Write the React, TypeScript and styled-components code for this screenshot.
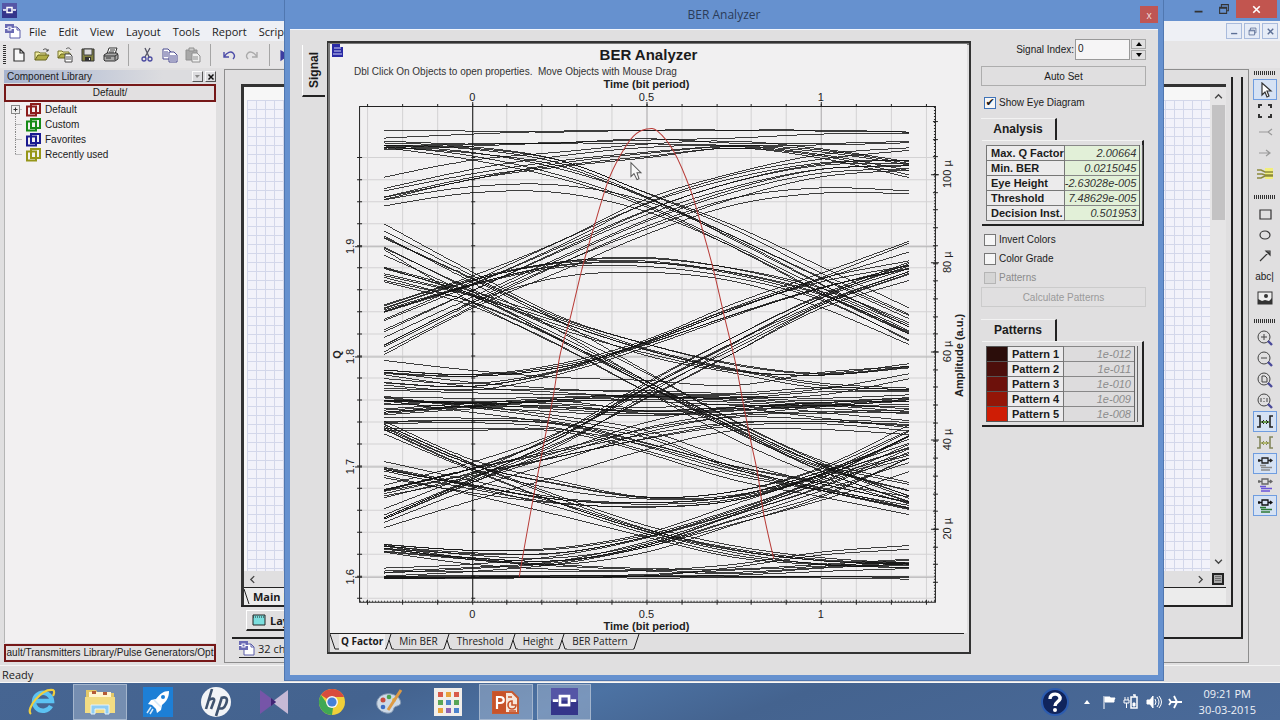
import React from 'react';
import styled, { createGlobalStyle, css } from 'styled-components';

const sans = '"Liberation Sans", Arial, sans-serif';
const ui = '"Open Sans", "Segoe UI", sans-serif';
const blue = '#6691cf';
const face = '#e0dfe0';

const Global = createGlobalStyle`
  * { box-sizing: border-box; }
  body { margin: 0; background: ${face}; font-family: ${sans}; font-size: 10px; color: #1b1b1b; }
  button, input { font: inherit; color: inherit; margin: 0; padding: 0; border: 0; background: none; }
  svg { display: block; flex: none; }
`;

/* ---------- desktop ---------- */
const Desktop = styled.div`
  position: relative;
  display: flex;
  flex-direction: column;
  min-height: 100vh;
  overflow: hidden;
`;
const MainWindow = styled.div`
  flex: 1;
  display: flex;
  flex-direction: column;
  border-bottom: 1px solid #f8f8f8;
`;
const TitleBar = styled.header`
  display: flex;
  justify-content: space-between;
  height: 21px;
  padding-left: 2px;
  background: ${blue};
`;
const WindowButtons = styled.div`
  display: flex;
  padding-right: 3px;
`;
const WindowButton = styled.button<{ $close?: boolean }>`
  display: grid;
  place-items: center;
  width: ${p => (p.$close ? 41 : 25)}px;
  height: 18px;
  background: ${p => (p.$close ? '#c2554f' : 'transparent')};
`;
const MenuBar = styled.nav`
  display: flex;
  align-items: center;
  height: 20px;
  padding-left: 5px;
  background: #eef0f5;
  font-family: ${ui};
  font-size: 11px;
`;
const MenuItems = styled.div`
  flex: 1;
  display: flex;
  gap: 12px;
  padding-left: 8px;
`;
const MdiButtons = styled.div`
  display: flex;
  gap: 2px;
  padding-right: 2px;
`;
const MdiButton = styled.button`
  display: grid;
  place-items: center;
  width: 16px;
  height: 16px;
  border: 1px solid #a9bbdc;
  background: #e6ecf7;
`;
const ToolBar = styled.div`
  display: flex;
  align-items: center;
  height: 27px;
  padding-left: 3px;
  gap: 2px;
  background: #e6e5e6;
`;
const ToolButton = styled.button`
  display: grid;
  place-items: center;
  width: 21px;
  height: 22px;
`;
const Grip = styled.i<{ $across?: boolean }>`
  flex: none;
  ${p => p.$across
    ? css`width: 22px; height: 4px; background: repeating-linear-gradient(90deg, #333 0 1px, transparent 1px 2px);`
    : css`width: 3px; height: 20px; background: repeating-linear-gradient(#333 0 1px, transparent 1px 2px);`}
`;
const Separator = styled.i`
  width: 1px;
  height: 22px;
  margin: 0 5px;
  background: #a5a5a5;
`;
const Body = styled.div`
  flex: 1;
  display: flex;
  background: ${face};
`;
const StatusBar = styled.footer`
  height: 17px;
  padding-left: 2px;
  border-top: 1px solid #f4f4f4;
  font-family: ${ui};
  font-size: 11px;
  line-height: 17px;
`;

/* ---------- component library ---------- */
const Library = styled.aside`
  display: flex;
  flex-direction: column;
  width: 217px;
  padding: 2px 1px 3px 4px;
`;
const LibraryHeader = styled.div`
  display: flex;
  align-items: center;
  gap: 2px;
  height: 13px;
  padding-left: 3px;
  background: linear-gradient(90deg, #a6b4d0, #dcdcdf 75%);
`;
const LibraryTitle = styled.span`flex: 1;`;
const SmallButton = styled.button`
  display: grid;
  place-items: center;
  width: 11px;
  height: 11px;
  border: 1px solid;
  border-color: #fafafa #555 #555 #fafafa;
`;
const PathBox = styled.div`
  display: flex;
  justify-content: center;
  height: 18px;
  margin-top: 1px;
  border: 2px solid #761818;
  background: #e2e0e1;
  line-height: 14px;
  white-space: nowrap;
`;
const Tree = styled.ul`
  flex: 1;
  margin: 0;
  padding: 0 0 0 6px;
  list-style: none;
  border-left: 1px solid #b5b5b5;
  background: #f2f0f1;
`;
const TreeItem = styled.li`
  display: flex;
  align-items: center;
  gap: 4px;
  height: 15px;
`;

/* ---------- workspace ---------- */
const Workspace = styled.main`
  flex: 1;
  display: flex;
  flex-direction: column;
  margin: 1px 0 2px 7px;
  padding: 7px 5px 0 7px;
  border: 1px solid #8d8d8d;
`;
const MdiFrame = styled.div`
  flex: 1;
  display: flex;
  flex-direction: column;
  padding: 0 8px 1px 9px;
  border-right: 2px solid #222;
  border-bottom: 2px solid #222;
`;
const LayoutFrame = styled.div`
  flex: 1;
  display: flex;
  flex-direction: column;
  padding: 7px 0 0 0;
  border-right: 2px solid #222;
`;
const CanvasFrame = styled.div`
  flex: 1;
  display: flex;
  flex-direction: column;
  margin-right: 5px;
  border: solid #333;
  border-width: 3px 0 0 3px;
`;
const CanvasRow = styled.div`
  flex: 1;
  display: flex;
`;
const Canvas = styled.div`
  flex: 1;
  border-top: 13px solid #f7f7f7;
  border-left: 3px solid #f7f7f7;
  background:
    repeating-linear-gradient(90deg, #d3d7ea 0 1px, transparent 1px 9px),
    repeating-linear-gradient(#d3d7ea 0 1px, #f2f2fa 1px 9px);
`;
const VScroll = styled.div`
  display: flex;
  flex-direction: column;
  align-items: center;
  justify-content: space-between;
  width: 16px;
  padding: 5px 0;
  background: #e6e5e6;
`;
const VThumb = styled.div`
  width: 13px;
  height: 115px;
  margin: 4px 0 auto;
  background: #c3c2c3;
`;
const HScroll = styled.div`
  display: flex;
  align-items: center;
  justify-content: space-between;
  height: 17px;
  padding: 0 1px 0 4px;
  border-bottom: 1px solid #222;
`;
const HEnd = styled.div`
  display: flex;
  align-items: center;
  gap: 6px;
`;
const SheetTab = styled.div`
  display: flex;
  align-items: center;
  gap: 3px;
  height: 17px;
  font: bold 11px ${ui};
  background: #ececec;
`;
const LayoutTabs = styled.div`
  display: flex;
  height: 31px;
  padding: 3px 0 5px 5px;
  border-top: 2px solid #222;
`;
const LayoutTab = styled.button`
  display: flex;
  align-items: center;
  gap: 4px;
  width: 80px;
  padding-left: 5px;
  border: 1px solid #fff;
  border-bottom: 2px solid #222;
  font: bold 11px ${ui};
`;
const DocTab = styled.button`
  display: flex;
  align-items: center;
  gap: 3px;
  width: 80px;
  height: 19px;
  margin: 0 0 4px 7px;
  border-bottom: 1px solid #222;
  font-family: ${ui};
  font-size: 11px;
`;
const SideBar = styled.div`
  display: flex;
  flex-direction: column;
  align-items: center;
  width: 31px;
  padding-top: 3px;
`;
const SideGroup = styled.div`
  display: flex;
  flex-direction: column;
  align-items: center;
  padding: 4px 0 11px;
`;
const SideButton = styled.button<{ $on?: boolean }>`
  display: grid;
  place-items: center;
  width: 24px;
  height: 21px;
  border: 1px solid ${p => (p.$on ? '#6f9de0' : 'transparent')};
  background: ${p => (p.$on ? '#d6e2f4' : 'transparent')};
`;

/* ---------- dialog ---------- */
const Dialog = styled.section`
  position: absolute;
  top: 0;
  right: 116px;
  bottom: 39px;
  left: 284px;
  display: flex;
  flex-direction: column;
  padding: 0 5px 6px;
  border: 1px solid #5077b0;
  border-top: 0;
  background: ${blue};
`;
const DialogTitle = styled.header`
  flex: none;
  display: grid;
  grid-template-columns: 18px 1fr 18px;
  align-items: center;
  height: 29px;
  color: #2a3c59;
  font-family: ${ui};
  font-size: 12px;
  text-align: center;
`;
const DialogClose = styled.button`
  align-self: start;
  height: 17px;
  margin-top: 6px;
  background: #bf5654;
  color: #f1dcdc;
  font-size: 10px;
  line-height: 16px;
`;
const DialogBody = styled.div`
  flex: 1;
  display: flex;
  border-top: 1px solid #f3f6fc;
  background: ${face};
`;
const SignalTab = styled.button`
  align-self: flex-start;
  width: 23px;
  height: 52px;
  margin: 15px 0 0 12px;
  border-right: 1px solid #fff;
  border-top: 2px solid #222;
  writing-mode: vertical-rl;
  transform: rotate(180deg);
  font: bold 12px ${sans};
`;
const ChartPanel = styled.div`
  flex: 1;
  display: flex;
  flex-direction: column;
  margin: 11px 0 21px 2px;
  border: 1px solid #333;
  border-width: 2px 2px 2px 1px;
  box-shadow: inset 1px 1px 0 1px #777;
`;
const ChartSheet = styled.div`
  flex: 1;
  margin: 1px 2px 0 2px;
  background: #f1f0f1;
`;
const ChartHeader = styled.div`
  display: grid;
  grid-template-columns: 14px 1fr 16px;
  padding-left: 2px;
`;
const ChartTitle = styled.h1`
  margin: 1px 0 0;
  font-size: 15px;
  line-height: 20px;
  text-align: center;
`;
const ChartHint = styled.p`
  margin: 0 0 0 24px;
  line-height: 14px;
  color: #333;
  white-space: pre;
`;
const Plot = styled.svg`
  width: 100%;
  height: auto;
`;
const TabStrip = styled.div`
  display: flex;
  height: 19px;
  border-top: 1px solid #222;
  margin: 0 5px 0 2px;
`;
const ChartTab = styled.button<{ $active?: boolean }>`
  height: 16px;
  padding: 0 ${p => (p.$active ? 2 : 5)}px;
  border-bottom: 1px solid ${p => (p.$active ? '#f1f0f1' : '#777')};
  background: ${p => (p.$active ? '#f1f0f1' : 'transparent')};
  font-family: ${ui};
  font-size: 10px;
  font-weight: ${p => (p.$active ? 700 : 400)};
`;
const Controls = styled.form`
  display: flex;
  flex-direction: column;
  width: 187px;
  padding: 9px 12px 0 10px;
`;
const IndexRow = styled.label`
  display: flex;
  align-items: center;
  justify-content: flex-end;
  gap: 1px;
  height: 21px;
`;
const IndexInput = styled.input`
  width: 55px;
  height: 21px;
  padding: 0 2px 3px;
  border: 1px solid #999;
  background: #f6f5f6;
`;
const Spinner = styled.span`
  display: flex;
  flex-direction: column;
  gap: 1px;
  width: 15px;
`;
const SpinButton = styled.button`
  display: grid;
  place-items: center;
  height: 10px;
  border: 1px solid #a8a8a8;
`;
const PushButton = styled.button`
  height: 20px;
  border: 1px solid #adadad;
  &:disabled { color: #9a9a9a; border-color: #cbcbcb; }
`;
const AutoButton = styled(PushButton)`margin: 6px 0 7px;`;
const Check = styled.label<{ $off?: boolean }>`
  display: flex;
  align-items: center;
  gap: 3px;
  height: 19px;
  padding-left: 3px;
  color: ${p => (p.$off ? '#8b8b8b' : 'inherit')};
`;
const CheckBox = styled.input`
  appearance: none;
  display: grid;
  place-items: center;
  width: 12px;
  height: 12px;
  border: 1px solid #777;
  background: #f6f6f6;
  &:checked { border-color: #3f73b8; }
  &:checked::after { content: '✔'; font: 11px/10px "DejaVu Sans", sans-serif; }
  &:disabled { background: #d5d5d5; border-color: #b5b5b5; }
`;
const GroupTab = styled.h2`
  align-self: flex-start;
  width: 76px;
  height: 22px;
  margin: 0;
  border-right: 2px solid #222;
  border-top: 1px solid #f2f2f2;
  font-size: 12px;
  line-height: 20px;
  text-align: center;
`;
const AnalysisTab = styled(GroupTab)`margin-top: 6px;`;
const PatternTab = styled(GroupTab)`margin-top: 12px;`;
const GroupBox = styled.div`
  margin: 0 2px 4px 1px;
  padding: 4px 4px 3px;
  border-right: 2px solid #222;
  border-bottom: 2px solid #222;
  border-top: 1px solid #f3f3f3;
`;
const Table = styled.table`
  width: 100%;
  border-collapse: collapse;
  border: 1px solid #666;
  border-right: 4px double #666;
  font-size: 11px;
  line-height: 14px;
`;
const Name = styled.th`
  width: 75px;
  height: 15px;
  padding: 0 0 0 4px;
  border: 1px solid #777;
  background: #ecebec;
  text-align: left;
  white-space: nowrap;
`;
const PatternName = styled(Name)`width: 56px;`;
const Value = styled.td<{ $green?: boolean }>`
  padding: 0 3px 0 0;
  border: 1px solid #888;
  background: ${p => (p.$green ? '#e2f0d8' : '#dddcdd')};
  color: ${p => (p.$green ? '#333' : '#8c8c8c')};
  font-style: italic;
  text-align: right;
  white-space: nowrap;
`;
const Swatch = styled.td<{ $color: string }>`
  width: 21px;
  padding: 0;
  border: 1px solid #555;
  background: ${p => p.$color};
`;

/* ---------- taskbar ---------- */
const TaskBar = styled.footer`
  display: flex;
  align-items: center;
  height: 37px;
  padding: 0 24px 0 15px;
  gap: 4px;
  background: linear-gradient(160deg, #466592, #44638f 30%, #4c72a3 45%, #44638f 60%, #4a6a99);
  color: #eef2f8;
  font-family: ${ui};
  font-size: 11px;
`;
const TaskButton = styled.button<{ $open?: boolean }>`
  display: grid;
  place-items: center;
  width: 54px;
  height: 36px;
  border: 1px solid ${p => (p.$open ? '#a3b5cd' : 'transparent')};
  background: ${p => (p.$open ? 'rgba(190, 205, 225, .4)' : 'transparent')};
`;
const Tray = styled.div`
  display: flex;
  align-items: center;
  gap: 6px;
  margin-left: auto;
`;
const Clock = styled.time`
  margin-left: 9px;
  line-height: 16px;
  text-align: center;
`;

/* ---------- icons ---------- */
const AppIcon = ({ size = 15 }: { size?: number }) => (
  <svg width={size} height={size} viewBox="0 0 15 15">
    <rect width="15" height="15" fill="#34358a" />
    <path d="M0 0h15v7H0z" fill="#5556a6" />
    <rect x="5" y="4.500" width="5" height="5" fill="none" stroke="#fff" strokeWidth="1.500" />
    <path d="M1 7h3M11 7h3" stroke="#fff" strokeWidth="1.500" />
  </svg>
);
const DocIcon = () => (
  <svg width="16" height="15" viewBox="0 0 16 15">
    <path d="M5 3h7l3 3v8H5z" fill="#fff" stroke="#5a5da8" />
    <path d="M12 3v3h3" fill="none" stroke="#5a5da8" />
    <rect width="9" height="9" fill="#6a6bb4" />
    <rect x="3" y="3" width="3" height="3" fill="none" stroke="#fff" />
    <path d="M0 4.500h3M6 4.500h3" stroke="#fff" />
  </svg>
);
const Stroke = ({ d, color = '#333', w = 1.2, size = 16, fill = 'none' }: { d: string; color?: string; w?: number; size?: number; fill?: string }) => (
  <svg width={size} height={size} viewBox="0 0 16 16"><path d={d} fill={fill} stroke={color} strokeWidth={w} /></svg>
);
const minimise = 'M3 11h9';
const restore = 'M3 6h8v7H3zM5 6V3h8v7h-2M3 7h8';
const cross = 'M4 4l8 8M12 4l-8 8';

const toolIcons: [string, React.ReactNode][] = [
  ['New', <Stroke d="M3 2h6l4 4v8H3zM9 2v4h4" fill="#f7f7f7" />],
  ['Open', <svg width="16" height="16" viewBox="0 0 16 16"><path d="M1 13V5h4l1 1h6v2" fill="#f0eda0" stroke="#77752c" /><path d="M1 13l3-5h11l-3 5z" fill="#b0ad45" stroke="#66641f" /><path d="M9 3c2-2 4-1 5 1m0-2v2h-2" fill="none" stroke="#444" /></svg>],
  ['Open sample', <svg width="16" height="16" viewBox="0 0 16 16"><path d="M1 11V4h4l1 1h6v2" fill="#f0eda0" stroke="#77752c" /><path d="M1 11l3-4h10l-2 4z" fill="#b0ad45" stroke="#66641f" /><path d="M8 7h5l2 2v6H8z" fill="#fff" stroke="#444" /><path d="M9 10h5M9 12h5M9 2c2-2 4-1 5 1" fill="none" stroke="#555" /></svg>],
  ['Save', <svg width="16" height="16" viewBox="0 0 16 16"><path d="M2 2h12v12H2z" fill="#808040" stroke="#333" /><path d="M4 2h8v6H4z" fill="#ddd" stroke="#444" /><path d="M5 10h6v4H5z" fill="#333" /><path d="M9 11h1v2H9z" fill="#fff" /></svg>],
  ['Print', <svg width="16" height="16" viewBox="0 0 16 16"><path d="M4 7l2-6h8l-2 6z" fill="#fff" stroke="#333" /><path d="M1 8l3-2h10l1 2v4l-3 2H2l-1-1z" fill="#aaa" stroke="#333" /><path d="M1 9h11v4M12 9l3-2M7 3h5M6 5h5M3 11h5" fill="none" stroke="#333" /></svg>],
];
const editIcons: [string, React.ReactNode][] = [
  ['Cut', <svg width="16" height="16" viewBox="0 0 16 16" fill="none" stroke="#4a4aa0" strokeWidth="1.300"><path d="M6 1l4 9M11 1L6 10" stroke="#556" /><circle cx="5" cy="12" r="2" /><circle cx="11" cy="12" r="2" /></svg>],
  ['Copy', <svg width="16" height="16" viewBox="0 0 16 16" stroke="#4a4a90"><path d="M1 2h5l3 3v7H1z" fill="#fff" /><path d="M7 5h5l3 3v7H7z" fill="#fff" /><path d="M2 5h4M2 7h4M2 9h4M8 9h6M8 11h6M8 13h6" /></svg>],
  ['Paste', <svg width="16" height="16" viewBox="0 0 16 16" stroke="#909090"><path d="M1 3h11v10H1z" fill="#a8a8a8" /><path d="M4 1h5v3H4z" fill="#ccc" /><path d="M7 6h5l3 3v6H7z" fill="#eee" /><path d="M8 10h5M8 12h5" /></svg>],
];
const undoIcons: [string, React.ReactNode][] = [
  ['Undo', <Stroke d="M3 5v5h5M3 10c3-5 7-6 9-4s2 4 0 6" color="#4c4ca8" w={1.4} />],
  ['Redo', <Stroke d="M13 5v5H8M13 10c-3-5-7-6-9-4s-2 4 0 6" color="#aaaaaa" w={1.4} />],
];
const Lens = ({ children }: { children: React.ReactNode }) => (
  <svg width="18" height="18" viewBox="0 0 18 18" fill="none" stroke="#444"><circle cx="8" cy="8" r="6" /><path d="M12 12l4 4" stroke="#4a4a9a" strokeWidth="2.400" />{children}</svg>
);
const Comp = ({ a, b }: { a: string; b: string }) => (
  <svg width="16" height="16" viewBox="0 0 16 16" fill="none"><path d="M5 2h6v5H5zM1 4.500h4M11 4.500h4M2 3v3M13 3l2 1.500-2 1.500" stroke={a} strokeWidth="1.300" /><path d="M3 9.500h6M4 11.500h11M4 14h9" stroke={b} strokeWidth="1.300" /></svg>
);
const Link = ({ c, g }: { c: string; g: string }) => (
  <svg width="18" height="14" viewBox="0 0 18 14" fill="none" stroke={c} strokeWidth="1.600"><path d="M1 1h3v11H1M17 1h-3v11h3" /><path d="M5 7h8" stroke={g} /><path d="M8 5L6 7l2 2M10 5l2 2-2 2" strokeWidth="1" /></svg>
);
type SideItem = [string, React.ReactNode, boolean?];
const sideGroups: SideItem[][] = [
  [
    ['Select', <Stroke d="M5 1v12l3-3 2 5 2-1-2-5h4z" fill="#fff" />, true],
    ['Fit', <Stroke d="M2 5V2h3M11 2h3v3M14 11v3h-3M5 14H2v-3" w={2} />],
    ['Input port', <Stroke d="M2 8h10M15 5l-4 3 4 3" color="#999" />],
    ['Output port', <Stroke d="M2 8h10M9 5l4 3-4 3" color="#999" />],
    ['Path', <svg width="18" height="14" viewBox="0 0 18 14" fill="none"><path d="M9 1h8v11H9z" fill="#f2ef7c" /><path d="M1 3h4l4 2h8M1 7h5l3 1h8M1 11h4l4-2h8" stroke="#8c8a3c" strokeWidth="1.500" /></svg>],
  ],
  [
    ['Rectangle', <Stroke d="M3 4h11v9H3z" />],
    ['Ellipse', <Stroke d="M3 8a5 4 0 1 0 10 0a5 4 0 1 0-10 0" />],
    ['Arrow', <Stroke d="M3 13L12 4M9 3h4v4z" />],
    ['Text', 'abc|'],
    ['Image', <svg width="16" height="14" viewBox="0 0 16 14"><rect x="1" y="1" width="14" height="12" fill="#eee" stroke="#333" /><circle cx="9" cy="5" r="2" fill="#333" /><path d="M1 13V8l4 2 3-1 4 1 3-3v6z" fill="#333" /></svg>],
  ],
  [
    ['Zoom in', <Lens><path d="M8 5v6M5 8h6" /></Lens>],
    ['Zoom out', <Lens><path d="M5 8h6" /></Lens>],
    ['Zoom page', <Lens><path d="M6 5h3l2 2v4H6z" /></Lens>],
    ['Zoom 1:1', <Lens><path d="M5 6v4M11 6v4M8 6v1M8 9v1" /></Lens>],
    ['Connect', <Link c="#222" g="#4d8d22" />, true],
    ['Disconnect', <Link c="#83865c" g="#a7b050" />],
    ['Names', <Comp a="#222" b="#8a8a8a" />, true],
    ['Results', <Comp a="#666" b="#6a55d8" />],
    ['Notes', <Comp a="#111" b="#2c7a35" />, true],
  ],
];
const Box = ({ c }: { c: string }) => (
  <svg width="15" height="14" viewBox="0 0 15 14" fill="none" stroke={c} strokeWidth="2"><path d="M5 1h9v9H5z" /><path d="M1 3.500h9v9H1z" /></svg>
);
const Branch = ({ plus, last }: { plus?: boolean; last?: boolean }) => (
  <svg width="11" height="15" viewBox="0 0 11 15" fill="none" stroke="#888">
    <path d={`M4.500 ${plus ? 8 : 0}V${last ? 7 : 15}M4.500 7.500H11`} strokeDasharray="1 1" />
    {plus && <><rect x=".5" y="3.500" width="8" height="8" fill="#eee" /><path d="M2.500 7.500h4M4.500 5.500v4" stroke="#333" /></>}
  </svg>
);

const taskIcons: [string, React.ReactNode, boolean?][] = [
  ['Internet Explorer', <svg width="30" height="30" viewBox="0 0 30 30" fill="none"><path d="M24 19a9 9 0 1 1 1-5H9" stroke="#5cc3f3" strokeWidth="4.500" /><path d="M4 27C-2 22 15 1 26 3c2 1 1 4 0 6" stroke="#f0cf3e" strokeWidth="2.200" /></svg>],
  ['File Explorer', <svg width="32" height="30" viewBox="0 0 32 30"><path d="M2 3h10l2 3h16v19H2z" fill="#e3c868" /><path d="M5 5h22v5H5z" fill="#fff5d0" /><path d="M8 4h4v3H8zM19 5h4v3h-4z" fill="#b55b36" /><path d="M1 10h30v16H1z" fill="#f2dc83" /><path d="M7 27v-9h18v9h-4v-5H11v5z" fill="#8fcdf3" stroke="#e4f3fd" /></svg>, true],
  ['Rocket', <svg width="30" height="30" viewBox="0 0 30 30"><rect width="30" height="30" fill="#1d7fd6" /><path d="M26 4c-6 0-9 3-13 8l-5 1-3 4 4 1 4 4 1 4 4-3 1-5c5-4 7-8 7-14z" fill="#fff" /><circle cx="20" cy="10" r="2" fill="#1d7fd6" /><path d="M8 20l-4 6M10 22l-3 5M11 13l7 7" stroke="#d6e9f9" strokeWidth="1.500" /></svg>],
  ['HP', <svg width="30" height="30" viewBox="0 0 30 30"><circle cx="15" cy="15" r="15" fill="#f2f4f7" /><path d="M11 2L5 22M8 13c3-2 6-2 5 1l-3 8M21 10l-6 19M20 11c6-2 7 1 5 6s-4 5-8 4" fill="none" stroke="#3f536f" strokeWidth="2.600" /></svg>],
  ['Media player', <svg width="30" height="26" viewBox="0 0 30 26"><path d="M29 1L13 13l16 12z" fill="#c6b9d6" /><path d="M1 1l16 12L1 25z" fill="#7655a8" /><path d="M17 13l-5-4v8z" fill="#402575" /></svg>],
  ['Chrome', <svg width="28" height="28" viewBox="0 0 28 28"><circle cx="14" cy="14" r="13" fill="#f0cf3a" /><path d="M14 14L3 7a13 13 0 0 1 23 2H14z" fill="#d84c3d" /><path d="M14 27A13 13 0 0 1 3 7l7 10 5 3z" fill="#40a854" /><circle cx="14" cy="14" r="6" fill="#f5f5f5" /><circle cx="14" cy="14" r="4.600" fill="#4480d8" /></svg>],
  ['Paint', <svg width="30" height="30" viewBox="0 0 30 30"><path d="M3 12C8 4 22 6 25 13s-5 5-6 8-2 6-8 5S-1 19 3 12z" fill="#cdd9e6" stroke="#8296b0" /><circle cx="8" cy="13" r="2.500" fill="#c84c3e" /><circle cx="14" cy="10" r="2.300" fill="#4aa24f" /><circle cx="8" cy="20" r="2.300" fill="#3d6cc4" /><circle cx="19" cy="13" r="2" fill="#e8c537" /><path d="M13 23L26 3" stroke="#dd9a44" strokeWidth="3" /></svg>],
  ['Apps', <svg width="28" height="28" viewBox="0 0 28 28"><rect width="28" height="28" fill="#f1eeea" />{['#d95a4b', '#e8a33c', '#d95a4b', '#5aa556', '#4c83cc', '#5aa556', '#e8a33c', '#8f63b0', '#4c83cc'].map((c, i) => <rect key={i} x={4 + (i % 3) * 8} y={4 + Math.floor(i / 3) * 8} width="5" height="5" fill={c} />)}</svg>],
  ['PowerPoint', <svg width="28" height="28" viewBox="0 0 28 28"><path d="M1 4h19l6 6v15H1z" fill="#f7e6da" stroke="#c75b32" strokeWidth="2" /><path d="M1 4h13v21H1z" fill="#c8532a" /><path d="M20 13a4 4 0 1 0 4 4h-4z" fill="none" stroke="#c8532a" strokeWidth="1.600" /><path d="M16 9h4M17 23h7" stroke="#c8532a" strokeWidth="1.500" /><path d="M5 21V9h3c5 0 5 6 0 6H5" fill="none" stroke="#fff" strokeWidth="2.200" /></svg>, true],
  ['OptiSystem', <AppIcon size={27} />, true],
];

/* ---------- eye diagram ---------- */
// Every bundle: centre line at t = -0.25 … 1.25 in quarter-bit steps, half-spread at the same times, trace count.
type Bundle = { mid: number[]; spread: number[]; n: number };
const xs = [384, 472, 559, 646, 733, 820, 908];
const bundles: Bundle[] = [
  { mid: [130, 131, 132, 130, 130, 131, 132], spread: [0, 0, 0, 0, 0, 0, 0], n: 1 },
  { mid: [138, 134, 131, 130, 130, 130, 132], spread: [0, 0, 0, 0, 0, 0, 0], n: 1 },
  { mid: [141, 144, 142, 140, 138, 134, 133], spread: [0, 0, 1, 0, 0, 0, 0], n: 1 },
  { mid: [149, 145, 143, 141, 144, 144, 142], spread: [1, 1, 0, 2, 1, 1, 1], n: 2 },
  { mid: [145, 149, 162, 195, 232, 274, 314], spread: [2, 3, 3, 3, 6, 6, 5], n: 4 },
  { mid: [146, 156, 174, 203, 244, 288, 328], spread: [1, 3, 4, 5, 5, 6, 5], n: 3 },
  { mid: [177, 160, 152, 144, 141, 149, 162], spread: [0, 0, 0, 0, 0, 1, 1], n: 1 },
  { mid: [192, 174, 160, 151, 146, 152, 166], spread: [4, 4, 3, 3, 1, 3, 4], n: 3 },
  { mid: [198, 178, 166, 157, 148, 157, 176], spread: [1, 1, 1, 1, 0, 1, 1], n: 2 },
  { mid: [203, 190, 189, 206, 242, 287, 330], spread: [4, 3, 3, 4, 4, 5, 5], n: 2 },
  { mid: [308, 279, 243, 201, 174, 157, 149], spread: [3, 4, 3, 3, 1, 2, 1], n: 2 },
  { mid: [325, 287, 248, 210, 182, 165, 162], spread: [7, 5, 5, 5, 4, 3, 3], n: 4 },
  { mid: [343, 300, 260, 223, 193, 173, 168], spread: [5, 4, 4, 5, 4, 3, 2], n: 3 },
  { mid: [353, 307, 268, 230, 201, 190, 192], spread: [2, 1, 3, 3, 3, 3, 2], n: 2 },
  { mid: [309, 282, 264, 261, 272, 294, 333], spread: [3, 4, 3, 4, 4, 5, 8], n: 6 },
  { mid: [345, 302, 277, 272, 281, 307, 344], spread: [0, 0, 0, 0, 0, 0, 0], n: 1 },
  { mid: [237, 279, 320, 347, 367, 374, 366], spread: [11, 8, 6, 5, 4, 1, 2], n: 4 },
  { mid: [240, 284, 330, 379, 425, 463, 485], spread: [12, 8, 7, 6, 5, 4, 5], n: 3 },
  { mid: [248, 296, 342, 388, 435, 472, 497], spread: [1, 5, 3, 5, 5, 4, 5], n: 2 },
  { mid: [275, 300, 338, 382, 425, 466, 498], spread: [9, 6, 6, 7, 4, 5, 4], n: 5 },
  { mid: [272, 294, 322, 351, 370, 385, 389], spread: [4, 3, 4, 4, 2, 2, 1], n: 3 },
  { mid: [371, 375, 366, 342, 309, 279, 249], spread: [2, 1, 2, 2, 5, 7, 12], n: 4 },
  { mid: [382, 386, 371, 343, 311, 284, 266], spread: [3, 3, 2, 3, 5, 5, 4], n: 4 },
  { mid: [360, 370, 377, 380, 385, 372, 366], spread: [0, 0, 0, 0, 0, 0, 0], n: 1 },
  { mid: [373, 384, 390, 394, 396, 392, 376], spread: [1, 2, 2, 3, 2, 3, 2], n: 2 },
  { mid: [389, 391, 392, 393, 395, 389, 390], spread: [1, 2, 2, 2, 2, 2, 1], n: 2 },
  { mid: [399, 401, 399, 396, 398, 401, 397], spread: [2, 3, 3, 3, 3, 3, 2], n: 3 },
  { mid: [401, 404, 409, 413, 409, 404, 399], spread: [2, 2, 2, 2, 2, 2, 2], n: 3 },
  { mid: [411, 405, 399, 398, 401, 405, 411], spread: [2, 2, 2, 3, 3, 2, 2], n: 3 },
  { mid: [413, 407, 403, 412, 411, 404, 402], spread: [2, 2, 2, 1, 2, 2, 2], n: 2 },
  { mid: [407, 403, 405, 409, 406, 415, 424], spread: [2, 2, 2, 3, 3, 3, 3], n: 2 },
  { mid: [398, 408, 419, 434, 465, 487, 505], spread: [2, 3, 3, 3, 4, 4, 5], n: 3 },
  { mid: [421, 420, 424, 445, 469, 486, 504], spread: [3, 2, 3, 4, 5, 5, 6], n: 4 },
  { mid: [429, 429, 430, 449, 474, 491, 510], spread: [2, 1, 1, 3, 4, 4, 4], n: 2 },
  { mid: [426, 464, 484, 497, 493, 471, 432], spread: [4, 4, 4, 1, 3, 4, 6], n: 4 },
  { mid: [427, 466, 500, 529, 549, 560, 564], spread: [5, 4, 4, 3, 3, 3, 2], n: 4 },
  { mid: [469, 486, 500, 504, 498, 474, 446], spread: [6, 5, 3, 3, 3, 3, 6], n: 5 },
  { mid: [470, 488, 508, 533, 553, 562, 565], spread: [5, 5, 5, 3, 4, 3, 3], n: 3 },
  { mid: [490, 469, 437, 392, 348, 303, 272], spread: [4, 6, 6, 7, 7, 6, 7], n: 5 },
  { mid: [492, 471, 453, 435, 422, 421, 425], spread: [4, 4, 4, 5, 4, 2, 4], n: 4 },
  { mid: [515, 478, 438, 386, 340, 299, 268], spread: [5, 4, 6, 6, 5, 5, 5], n: 4 },
  { mid: [519, 483, 455, 427, 412, 410, 409], spread: [3, 4, 4, 4, 4, 4, 4], n: 3 },
  { mid: [527, 500, 475, 449, 430, 429, 434], spread: [0, 0, 0, 0, 0, 0, 0], n: 1 },
  { mid: [545, 551, 550, 535, 509, 478, 436], spread: [2, 2, 3, 2, 4, 4, 6], n: 4 },
  { mid: [549, 557, 560, 546, 518, 491, 454], spread: [3, 2, 3, 4, 5, 6, 5], n: 4 },
  { mid: [548, 560, 566, 569, 571, 566, 561], spread: [4, 3, 2, 1, 2, 2, 3], n: 3 },
  { mid: [570, 566, 559, 541, 515, 484, 458], spread: [2, 2, 4, 5, 4, 5, 3], n: 3 },
  { mid: [575, 570, 563, 547, 524, 500, 471], spread: [1, 2, 2, 3, 2, 1, 1], n: 1 },
  { mid: [574, 573, 573, 572, 565, 553, 547], spread: [2, 2, 2, 3, 2, 2, 2], n: 2 },
  { mid: [577, 577, 576, 575, 572, 568, 563], spread: [1, 1, 1, 1, 2, 2, 4], n: 2 },
  { mid: [577, 576, 576, 576, 576, 576, 577], spread: [1, 1, 1, 2, 1, 1, 1], n: 3 },
];

const smooth = (pts: number[][]) => pts.slice(1).reduce((d, p, i) => {
  const a = pts[Math.max(0, i - 1)], b = pts[i], c = pts[Math.min(pts.length - 1, i + 2)];
  return `${d}C${b[0] + (p[0] - a[0]) / 6} ${b[1] + (p[1] - a[1]) / 6} ${p[0] - (c[0] - b[0]) / 6} ${p[1] - (c[1] - b[1]) / 6} ${p[0]} ${p[1]}`;
}, `M${pts[0][0]} ${pts[0][1]}`);

const traces = bundles.flatMap((b, bi) => Array.from({ length: b.n }, (_, i) => {
  const t = b.n === 1 ? 0 : (2 * i) / (b.n - 1) - 1;
  return smooth(xs.map((x, k) => {
    const wobble = Math.sin(bi * 3.1 + i * 2.3 + k * 0.9) * 0.35;
    return [x, b.mid[k] + b.spread[k] * (t + wobble)];
  }));
})).join('');

const qCurve = smooth([[519, 576], [522, 558], [533, 497], [546, 430], [553, 395], [560, 353], [570, 317], [582, 267], [594, 225], [608, 180], [620, 155], [633, 136], [646, 129], [657, 131], [673, 151], [690, 190], [702, 230], [713, 270], [723, 313], [735, 363], [742, 400], [750, 440], [757, 473], [763, 513], [773, 558]]);

const range = (from: number, to: number, step: number) => {
  const out: number[] = [];
  for (let v = from; v <= to; v += step) out.push(Math.round(v) + 0.5);
  return out;
};
const gridX = range(367, 934, 34.85);
const gridY = range(113, 600, 22);

const EyePlot = () => (
  <Plot viewBox="330 79 636 553" role="img" aria-label="Eye diagram with Q factor" fontFamily={sans} fontSize="11" fill="#222">
    <g stroke="#d3d2d3">
      {gridX.map(x => <path key={x} d={`M${x} 107V600`} />)}
      {gridY.slice(2).map(y => <path key={y} d={`M360 ${y}H934`} />)}
    </g>
    <path d="M646.500 107V600M820.500 107V600M360 246.500H934M360 356.500H934M360 466.500H934M360 576.500H934" stroke="#b4b3b4" />
    <path d="M472.500 107V600" stroke="#111" />
    <g stroke="#222">
      <path d="M359.500 601V106.500H934.500V601M359 601.500H935" fill="none" />
      <path d="M360 600.500H934" strokeDasharray="1 2" />
      <path d="M933.500 107V600" strokeDasharray="1 2" />
      {gridX.map(x => <path key={x} d={`M${x} 104v2M${x} 599v5`} />)}
      {gridY.slice(2).map(y => <path key={y} d={`M357 ${y}h5M471 ${y}h4`} />)}
      <path d="M355 246.500h7M355 356.500h7M355 466.500h7M355 576.500h7M472.500 102v4M646.500 102v4M820.500 102v4" />
      {range(121, 598, 17.7).map(y => <path key={y} d={`M932 ${y}h5`} />)}
      <path d="M930 174.500h8M930 262.500h8M930 351.500h8M930 439.500h8M930 528.500h8" />
    </g>
    <path d={traces} fill="none" stroke="#111" strokeWidth=".8" shapeRendering="crispEdges" />
    <path d={qCurve} fill="none" stroke="#b83a36" />
    <path d="M630.500 162.500v14l3-3 3 6 2-1-2-6h4z" fill="#f7f7f7" stroke="#555" />
    <g textAnchor="middle">
      <g fontWeight="bold">
        <text x="646" y="88">Time (bit period)</text>
        <text x="646" y="629">Time (bit period)</text>
        <text transform="translate(341 354) rotate(-90)">Q</text>
        <text transform="translate(962 355) rotate(-90)">Amplitude (a.u.)</text>
      </g>
      {[101, 617].map(y => [[472, '0'], [646, '0.5'], [820, '1']].map(([x, s]) => <text key={`${x}-${y}`} x={x} y={y}>{s}</text>))}
      {[[246, '1.9'], [356, '1.8'], [466, '1.7'], [576, '1.6']].map(([y, s]) => <text key={s} transform={`translate(354 ${y}) rotate(-90)`}>{s}</text>)}
      {[[174, '100 µ'], [262, '80 µ'], [351, '60 µ'], [439, '40 µ'], [528, '20 µ']].map(([y, s]) => <text key={s} transform={`translate(950 ${y}) rotate(-90)`}>{s}</text>)}
    </g>
  </Plot>
);

const Slant = ({ kind }: { kind: 'first' | 'mid' | 'last' }) => (
  <svg width="9" height="16" viewBox="0 0 9 16" fill="none" stroke="#222">
    {kind === 'first' && <path d="M0 0l5 15h4" />}
    {kind === 'mid' && <path d="M0 15h1L6 0M4 6l3 9h2" />}
    {kind === 'last' && <path d="M0 15h1L6 0" />}
  </svg>
);

const analysis = [['Max. Q Factor', '2.00664'], ['Min. BER', '0.0215045'], ['Eye Height', '-2.63028e-005'], ['Threshold', '7.48629e-005'], ['Decision Inst.', '0.501953']];
const patterns = [['Pattern 1', '1e-012', '#2b0d0a'], ['Pattern 2', '1e-011', '#4c0f0b'], ['Pattern 3', '1e-010', '#6d110b'], ['Pattern 4', '1e-009', '#931607'], ['Pattern 5', '1e-008', '#cf1d05']];
const tabs = ['Q Factor', 'Min BER', 'Threshold', 'Height', 'BER Pattern'];

const Tools = ({ items }: { items: [string, React.ReactNode][] }) => (
  <>{items.map(([name, icon]) => <ToolButton key={name} aria-label={name}>{icon}</ToolButton>)}</>
);

const BerDialog = () => (
  <Dialog role="dialog" aria-label="BER Analyzer">
    <DialogTitle>
      <i />
      <span>BER Analyzer</span>
      <DialogClose aria-label="Close dialog">x</DialogClose>
    </DialogTitle>
    <DialogBody>
      <SignalTab>Signal</SignalTab>
      <ChartPanel>
        <ChartSheet>
          <ChartHeader>
            <svg width="12" height="14" viewBox="0 0 12 14"><path d="M1 0h7v3h3v10H0V0z" fill="#2929a4" /><path d="M2 4h7M2 7h7M1 10h9" stroke="#cfd2f5" /></svg>
            <ChartTitle>BER Analyzer</ChartTitle>
          </ChartHeader>
          <ChartHint>{'Dbl Click On Objects to open properties.  Move Objects with Mouse Drag'}</ChartHint>
          <EyePlot />
        </ChartSheet>
        <TabStrip>
          <Slant kind="first" />
          {tabs.map((t, i) => (
            <React.Fragment key={t}>
              <ChartTab $active={i === 0}>{t}</ChartTab>
              <Slant kind={i === tabs.length - 1 ? 'last' : 'mid'} />
            </React.Fragment>
          ))}
        </TabStrip>
      </ChartPanel>
      <Controls onSubmit={e => e.preventDefault()}>
        <IndexRow>
          Signal Index:
          <IndexInput defaultValue="0" />
          <Spinner>
            <SpinButton type="button" aria-label="Increase"><svg width="6" height="4"><path d="M0 4l3-4 3 4z" /></svg></SpinButton>
            <SpinButton type="button" aria-label="Decrease"><svg width="6" height="4"><path d="M0 0l3 4 3-4z" /></svg></SpinButton>
          </Spinner>
        </IndexRow>
        <AutoButton type="button">Auto Set</AutoButton>
        <Check><CheckBox type="checkbox" defaultChecked />Show Eye Diagram</Check>
        <AnalysisTab>Analysis</AnalysisTab>
        <GroupBox>
          <Table><tbody>
            {analysis.map(([n, v]) => <tr key={n}><Name scope="row">{n}</Name><Value $green>{v}</Value></tr>)}
          </tbody></Table>
        </GroupBox>
        <Check><CheckBox type="checkbox" />Invert Colors</Check>
        <Check><CheckBox type="checkbox" />Color Grade</Check>
        <Check $off><CheckBox type="checkbox" disabled />Patterns</Check>
        <PushButton type="button" disabled>Calculate Patterns</PushButton>
        <PatternTab>Patterns</PatternTab>
        <GroupBox>
          <Table><tbody>
            {patterns.map(([n, v, c]) => <tr key={n}><Swatch $color={c} /><PatternName scope="row">{n}</PatternName><Value>{v}</Value></tr>)}
          </tbody></Table>
        </GroupBox>
      </Controls>
    </DialogBody>
  </Dialog>
);

export default function App() {
  return (
    <Desktop>
      <Global />
      <MainWindow>
        <TitleBar>
          <svg width="15" height="19" viewBox="0 -3 15 19"><AppIcon /></svg>
          <WindowButtons>
            <WindowButton aria-label="Minimise"><Stroke d={minimise} w={2} size={14} /></WindowButton>
            <WindowButton aria-label="Restore"><Stroke d={restore} size={14} /></WindowButton>
            <WindowButton $close aria-label="Close"><Stroke d={cross} color="#fff" w={2} size={13} /></WindowButton>
          </WindowButtons>
        </TitleBar>
        <MenuBar>
          <DocIcon />
          <MenuItems>
            {['File', 'Edit', 'View', 'Layout', 'Tools', 'Report', 'Script'].map(m => <button key={m}>{m}</button>)}
          </MenuItems>
          <MdiButtons>
            <MdiButton aria-label="Minimise document"><Stroke d={minimise} color="#5c6f95" w={2} size={11} /></MdiButton>
            <MdiButton aria-label="Restore document"><Stroke d={restore} color="#5c6f95" size={11} /></MdiButton>
            <MdiButton aria-label="Close document"><Stroke d={cross} color="#5c6f95" w={2} size={11} /></MdiButton>
          </MdiButtons>
        </MenuBar>
        <ToolBar>
          <Grip />
          <Tools items={toolIcons} />
          <Separator />
          <Tools items={editIcons} />
          <Separator />
          <Tools items={undoIcons} />
          <Separator />
          <ToolButton aria-label="Run"><Stroke d="M1 4l7 4-7 5z" color="#3c3ca0" fill="#3c3ca0" /></ToolButton>
        </ToolBar>
        <Body>
          <Library>
            <LibraryHeader>
              <LibraryTitle>Component Library</LibraryTitle>
              <SmallButton aria-label="Library menu"><svg width="5" height="3"><path d="M0 0h5L2 3z" fill="#888" /></svg></SmallButton>
              <SmallButton aria-label="Close library"><Stroke d="M3 3l10 10M13 3L3 13" w={3} size={8} color="#111" /></SmallButton>
            </LibraryHeader>
            <PathBox>Default/</PathBox>
            <Tree>
              <TreeItem><Branch plus /><Box c="#8c1c1c" />Default</TreeItem>
              <TreeItem><Branch /><Box c="#178a17" />Custom</TreeItem>
              <TreeItem><Branch /><Box c="#1a1a90" />Favorites</TreeItem>
              <TreeItem><Branch last /><Box c="#96961a" />Recently used</TreeItem>
            </Tree>
            <PathBox>ault/Transmitters Library/Pulse Generators/Opt</PathBox>
          </Library>
          <Workspace>
            <MdiFrame>
              <LayoutFrame>
                <CanvasFrame>
                  <CanvasRow>
                    <Canvas />
                    <VScroll>
                      <Stroke d="M2 11l6-6 6 6" w={2.4} size={9} color="#444" />
                      <VThumb />
                      <Stroke d="M2 5l6 6 6-6" w={2.4} size={9} color="#444" />
                    </VScroll>
                  </CanvasRow>
                  <HScroll>
                    <Stroke d="M11 2L5 8l6 6" w={2.4} size={9} color="#444" />
                    <HEnd>
                      <Stroke d="M5 2l6 6-6 6" w={2.4} size={9} color="#444" />
                      <svg width="14" height="14" viewBox="0 0 14 14"><path d="M2 2h10v10H2z" fill="#aaa" stroke="#222" strokeWidth="2" /><path d="M5 4v6M7 4v6M9 4v6" stroke="#333" strokeDasharray="1 1" /></svg>
                    </HEnd>
                  </HScroll>
                  <SheetTab><svg width="6" height="16" viewBox="0 0 6 16"><path d="M0 0l5 15" stroke="#222" /></svg>Main layout</SheetTab>
                </CanvasFrame>
              </LayoutFrame>
              <LayoutTabs>
                <LayoutTab><svg width="14" height="12" viewBox="0 0 14 12"><path d="M1 1h12v10H1z" fill="#7bdede" stroke="#222" /><path d="M1 3h12" stroke="#222" strokeDasharray="1 1" /></svg>Layout</LayoutTab>
              </LayoutTabs>
            </MdiFrame>
            <DocTab><DocIcon />32 channel</DocTab>
          </Workspace>
          <SideBar>
            {sideGroups.map((g, i) => (
              <React.Fragment key={i}>
                <Grip $across />
                <SideGroup>
                  {g.map(([name, icon, on]) => <SideButton key={name} aria-label={name} $on={on}>{icon}</SideButton>)}
                </SideGroup>
              </React.Fragment>
            ))}
          </SideBar>
        </Body>
        <StatusBar>Ready</StatusBar>
      </MainWindow>
      <BerDialog />
      <TaskBar>
        {taskIcons.map(([name, icon, open]) => <TaskButton key={name} aria-label={name} $open={open}>{icon}</TaskButton>)}
        <Tray>
          <svg width="28" height="28" viewBox="0 0 28 28"><circle cx="14" cy="14" r="13" fill="#10245c" stroke="#2c5cb0" strokeWidth="2" /><path d="M9 11c0-7 11-6 10 0-1 3-5 3-5 7" fill="none" stroke="#fff" strokeWidth="3.400" /><circle cx="14" cy="22" r="2" fill="#fff" /></svg>
          <svg width="20" height="16" viewBox="0 0 20 16"><path d="M9 10l3-4 3 4z" fill="#fff" /></svg>
          <Stroke d="M3 2v13M4 3h5v5H4zM9 4h5l-1 2v2H9z" color="#fff" fill="#fff" w={1} />
          <svg width="17" height="16" viewBox="0 0 17 16" fill="none" stroke="#fff"><path d="M8 3h6v11H8zM10 1h2v2" strokeWidth="1.500" /><path d="M10 9h2v3h-2z" fill="#fff" /><path d="M2 3v3M5 3v3M1 6h5v3H1zM3.500 9v5" /></svg>
          <svg width="16" height="16" viewBox="0 0 16 16" fill="none" stroke="#fff"><path d="M1 6h3l3-4v12l-3-4H1z" fill="#fff" /><path d="M9 5q2 3 0 6M11 3q4 5 0 10M13 2q5 6 0 12" /></svg>
          <Stroke d="M2 8h12M9 8L6 2M9 8l-3 6M3 8L1 5M3 8l-2 3" color="#fff" w={1.8} />
          <Clock>09:21 PM<br />30-03-2015</Clock>
        </Tray>
      </TaskBar>
    </Desktop>
  );
}
